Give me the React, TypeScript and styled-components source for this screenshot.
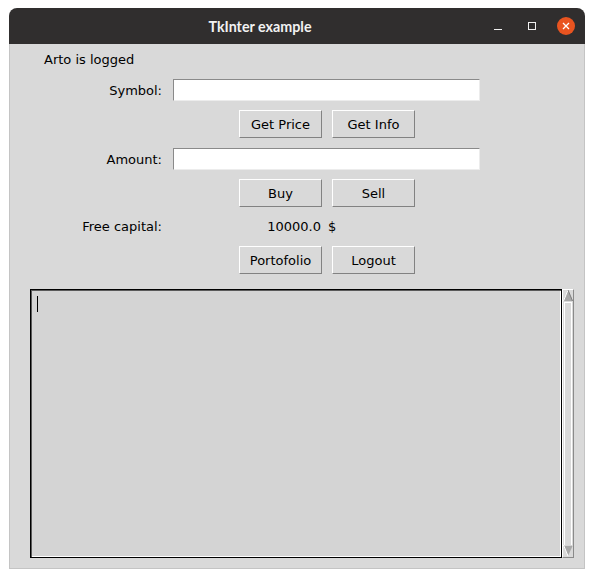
import styled, { createGlobalStyle } from 'styled-components';

const GlobalStyle = createGlobalStyle`
  html, body {
    margin: 0;
    padding: 0;
    background: #ffffff;
  }
  body {
    font-family: "DejaVu Sans", sans-serif;
  }
`;

const Window = styled.div`
  margin: 8px 0 0 9px;
  width: 576px;
  height: 561px;
  display: flex;
  flex-direction: column;
  border-radius: 8px 8px 0 0;
  overflow: hidden;
  box-sizing: border-box;
`;

const TitleBar = styled.div`
  height: 36px;
  flex: none;
  background: #302e2e;
  position: relative;
  display: flex;
  align-items: center;
  justify-content: center;
  padding-right: 74px;
`;

const Title = styled.div`
  color: #f2f2f2;
  font-family: "Lato", "DejaVu Sans", sans-serif;
  font-weight: 700;
  font-size: 14.3px;
`;

const Controls = styled.div`
  position: absolute;
  right: 10px;
  top: 0;
  height: 100%;
  display: flex;
  align-items: center;
  gap: 20px;

  & > svg:first-child {
    margin-right: 4px;
  }
`;

const CloseBtn = styled.div`
  width: 18px;
  height: 18px;
  border-radius: 50%;
  background: #e95420;
  display: flex;
  align-items: center;
  justify-content: center;
`;

const Body = styled.div`
  flex: 1;
  background: #d9d9d9;
  border: 1px solid #c4c4c4;
  border-top: none;
  display: flex;
  flex-direction: column;
`;

const Form = styled.div`
  display: grid;
  grid-template-columns: 163px 66px 83px 10px 83px 65px;
  grid-template-rows: 22px 22px 28px 23px 28px 21px 28px;
  row-gap: 9px;
  padding-top: 4px;
  font-size: 13px;
  color: #000;
`;

const Caption = styled.div<{ $align?: string; $pad?: number }>`
  display: flex;
  align-items: center;
  justify-content: ${(p) => p.$align || 'flex-end'};
  padding: 0 ${(p) => (p.$align === 'flex-start' ? 0 : p.$pad ?? 11)}px 0
    ${(p) => (p.$align === 'flex-start' ? p.$pad ?? 0 : 0)}px;
  white-space: nowrap;
`;

const Entry = styled.div`
  grid-column: 2 / 7;
  align-self: end;
  height: 22px;
  background: #ffffff;
  border-top: 1px solid #8a8a8a;
  border-left: 1px solid #8a8a8a;
  border-bottom: 1px solid #ececec;
  border-right: 1px solid #ececec;
  box-sizing: border-box;
`;

const Button = styled.div<{ $col: number }>`
  grid-column: ${(p) => p.$col};
  box-sizing: border-box;
  background: #d9d9d9;
  border-top: 1px solid #ffffff;
  border-left: 1px solid #ffffff;
  border-bottom: 1px solid #828282;
  border-right: 1px solid #828282;
  display: flex;
  align-items: center;
  justify-content: center;
  font-size: 13px;
`;

const TextRow = styled.div`
  display: flex;
  margin: 15px 0 0 20px;
  height: 269px;
`;

const TextBox = styled.div`
  width: 532px;
  box-sizing: border-box;
  border: 1px solid #000;
  box-shadow: inset 1px 1px 0 #5a5a5a, inset -1px -1px 0 #ffffff;
  background: #d4d4d4;
  padding: 6px 0 0 6px;
`;

const Caret = styled.div`
  width: 1px;
  height: 16px;
  background: #000;
`;

const Scrollbar = styled.div`
  width: 12px;
  box-sizing: border-box;
  background: #d9d9d9;
  border-left: 1px solid #ffffff;
  border-top: 1px solid #ffffff;
  border-right: 1px solid #8a8a8a;
  border-bottom: 1px solid #8a8a8a;
  display: flex;
  flex-direction: column;
`;

const Slider = styled.div`
  flex: 1;
  border-left: 1px solid #ffffff;
  border-right: 1px solid #ffffff;
  border-top: 1px solid #ffffff;
  margin: 0 1px;
`;

const Arrow = ({ down }: { down?: boolean }) => (
  <svg width="10" height="12" viewBox="0 0 10 12" style={{ display: 'block' }}>
    {down ? (
      <>
        <polygon points="0,0 10,0 5,11" fill="#a8a8a8" />
        <polyline points="0,0 10,0" stroke="#ffffff" fill="none" />
        <polyline points="0.5,0 5,11" stroke="#ffffff" fill="none" />
      </>
    ) : (
      <>
        <polygon points="5,0 10,11 0,11" fill="#a8a8a8" />
        <polyline points="0.5,11 5,0" stroke="#ffffff" fill="none" />
        <polyline points="5,0 9.5,11" stroke="#808080" fill="none" />
      </>
    )}
  </svg>
);

export default function App() {
  return (
    <>
      <GlobalStyle />
      <Window>
        <TitleBar>
          <Title>TkInter example</Title>
          <Controls>
            <svg width="10" height="10" viewBox="0 0 10 10">
              <line x1="1" y1="8.5" x2="9" y2="8.5" stroke="#f0f0f0" strokeWidth="1" />
            </svg>
            <svg width="10" height="10" viewBox="0 0 10 10">
              <rect x="1.5" y="1.5" width="7" height="7" stroke="#f0f0f0" fill="none" strokeWidth="1" />
            </svg>
            <CloseBtn>
              <svg width="8" height="8" viewBox="0 0 8 8">
                <path d="M1 1 L7 7 M7 1 L1 7" stroke="#ffffff" strokeWidth="1.3" />
              </svg>
            </CloseBtn>
          </Controls>
        </TitleBar>
        <Body>
          <Form>
            <Caption $align="flex-start" $pad={34}>Arto is logged</Caption>
            <div style={{ gridColumn: '2 / 7' }} />

            <Caption>Symbol:</Caption>
            <Entry />

            <div />
            <div />
            <Button $col={3}>Get Price</Button>
            <Button $col={5}>Get Info</Button>
            <div />

            <Caption style={{ paddingTop: 1 }}>Amount:</Caption>
            <Entry />

            <div />
            <div />
            <Button $col={3}>Buy</Button>
            <Button $col={5}>Sell</Button>
            <div />

            <Caption>Free capital:</Caption>
            <Caption style={{ gridColumn: '2 / 4' }} $pad={1}>10000.0</Caption>
            <Caption style={{ gridColumn: '4 / 7' }} $align="flex-start" $pad={6}>$</Caption>

            <div />
            <div />
            <Button $col={3}>Portofolio</Button>
            <Button $col={5}>Logout</Button>
            <div />
          </Form>
          <TextRow>
            <TextBox>
              <Caret />
            </TextBox>
            <Scrollbar>
              <Arrow />
              <Slider />
              <Arrow down />
            </Scrollbar>
          </TextRow>
        </Body>
      </Window>
    </>
  );
}
